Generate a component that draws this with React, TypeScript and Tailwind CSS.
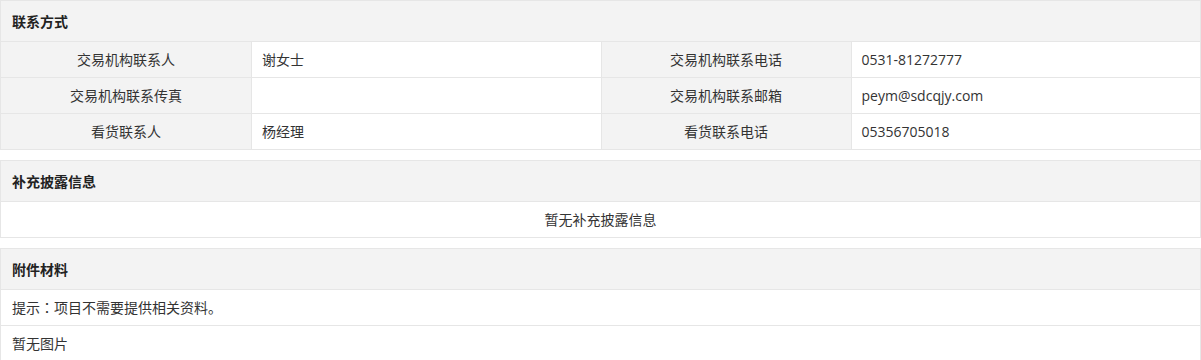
import React from 'react';

const font = { fontFamily: '"Noto Sans CJK SC", "Noto Sans", sans-serif' };
const latin = { fontFamily: '"Open Sans", "Noto Sans CJK SC", sans-serif' };

interface Pair {
  label: string;
  value: string;
}

const contactRows: [Pair, Pair][] = [
  [
    { label: '交易机构联系人', value: '谢女士' },
    { label: '交易机构联系电话', value: '0531-81272777' },
  ],
  [
    { label: '交易机构联系传真', value: '' },
    { label: '交易机构联系邮箱', value: 'peym@sdcqjy.com' },
  ],
  [
    { label: '看货联系人', value: '杨经理' },
    { label: '看货联系电话', value: '05356705018' },
  ],
];

const SectionHeader: React.FC<{ title: string }> = ({ title }) => (
  <div className="h-[40px] flex items-center px-[11px] bg-[#f3f3f3] font-bold text-[14px] text-[#222]">
    {title}
  </div>
);

const Section: React.FC<{ title: string; className?: string; children: React.ReactNode }> = ({
  title,
  className = '',
  children,
}) => (
  <div className={`border border-[#e6e6e6] ${className}`}>
    <SectionHeader title={title} />
    {children}
  </div>
);

// latin values get a wider face, like the original page
const isLatin = (s: string) => /^[\x00-\x7f]+$/.test(s);

export default function App() {
  return (
    <div className="w-[1201px] bg-white text-[14px] text-[#333]" style={font}>
      <Section title="联系方式">
        {contactRows.map((row, i) => (
          <div key={i} className="flex h-[36px] border-t border-[#e6e6e6]">
            {row.map((cell, j) => (
              <React.Fragment key={j}>
                <div
                  className={`w-[250px] flex items-center justify-center bg-[#f3f3f3] ${
                    j === 1 ? 'border-l border-[#e6e6e6]' : ''
                  }`}
                >
                  {cell.label}
                </div>
                <div className="flex-1 flex items-center px-[10px] border-l border-[#e6e6e6] bg-white">
                  <span style={isLatin(cell.value) ? latin : undefined}>{cell.value}</span>
                </div>
              </React.Fragment>
            ))}
          </div>
        ))}
      </Section>

      <Section title="补充披露信息" className="mt-[10px]">
        <div className="h-[36px] flex items-center justify-center border-t border-[#e6e6e6]">
          暂无补充披露信息
        </div>
      </Section>

      <Section title="附件材料" className="mt-[10px]">
        <div className="h-[36px] flex items-center px-[11px] border-t border-[#e6e6e6]">
          提示<span className="font-['Noto_Sans_CJK_TC']">：</span>项目不需要提供相关资料。
        </div>
        <div className="h-[36px] flex items-center px-[11px] border-t border-[#e6e6e6]">
          暂无图片
        </div>
      </Section>
    </div>
  );
}
